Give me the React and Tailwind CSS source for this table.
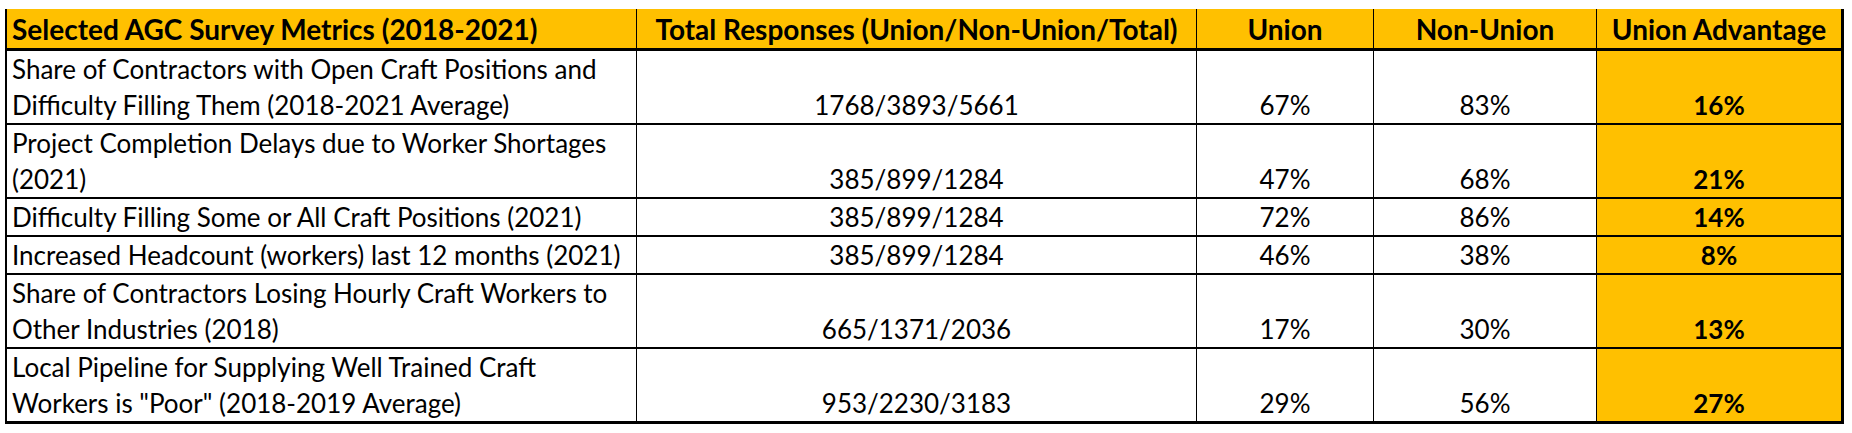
import React from "react";

const rows = [
  {
    label: ["Share of Contractors with Open Craft Positions and", "Difficulty Filling Them (2018-2021 Average)"],
    total: "1768/3893/5661",
    union: "67%",
    non: "83%",
    adv: "16%",
  },
  {
    label: ["Project Completion Delays due to Worker Shortages", "(2021)"],
    total: "385/899/1284",
    union: "47%",
    non: "68%",
    adv: "21%",
  },
  {
    label: ["Difficulty Filling Some or All Craft Positions (2021)"],
    total: "385/899/1284",
    union: "72%",
    non: "86%",
    adv: "14%",
  },
  {
    label: ["Increased Headcount (workers) last 12 months (2021)"],
    total: "385/899/1284",
    union: "46%",
    non: "38%",
    adv: "8%",
  },
  {
    label: ["Share of Contractors Losing Hourly Craft Workers to", "Other Industries (2018)"],
    total: "665/1371/2036",
    union: "17%",
    non: "30%",
    adv: "13%",
  },
  {
    label: ["Local Pipeline for Supplying Well Trained Craft", 'Workers is "Poor" (2018-2019 Average)'],
    total: "953/2230/3183",
    union: "29%",
    non: "56%",
    adv: "27%",
  },
];

const gridCols = "grid grid-cols-[630px_560px_177px_223px_244px]";

export default function App() {
  return (
    <div className="w-[1852px] h-[433px] bg-white pl-[5px] pt-[9px] font-['Lato',sans-serif] text-black text-[26px]">
      <div className="w-[1839px] border-l-2 border-r-[3px] border-b-[3px] border-black">
        <div className={`${gridCols} h-[42px] bg-[#FFC000] border-b-[3px] border-black font-bold text-[28px] leading-[36px]`}>
          <div className="border-r border-black pl-[5px] flex items-center whitespace-nowrap">
            Selected AGC Survey Metrics (2018-2021)
          </div>
          <div className="border-r border-black flex items-center justify-center whitespace-nowrap">
            Total Responses (Union/Non-Union/Total)
          </div>
          <div className="border-r border-black flex items-center justify-center">Union</div>
          <div className="border-r border-black flex items-center justify-center">Non-Union</div>
          <div className="flex items-center justify-center whitespace-nowrap">Union Advantage</div>
        </div>
        {rows.map((r, i) => (
          <div
            key={i}
            className={`${gridCols} leading-[36px] ${i < rows.length - 1 ? "border-b-2 border-black" : ""}`}
          >
            <div className="border-r border-black pl-[5px] whitespace-nowrap">
              {r.label.map((l, j) => (
                <div key={j}>{l}</div>
              ))}
            </div>
            <div className="border-r border-black flex items-end justify-center">{r.total}</div>
            <div className="border-r border-black flex items-end justify-center">{r.union}</div>
            <div className="border-r border-black flex items-end justify-center">{r.non}</div>
            <div className="bg-[#FFC000] flex items-end justify-center font-bold">{r.adv}</div>
          </div>
        ))}
      </div>
    </div>
  );
}
